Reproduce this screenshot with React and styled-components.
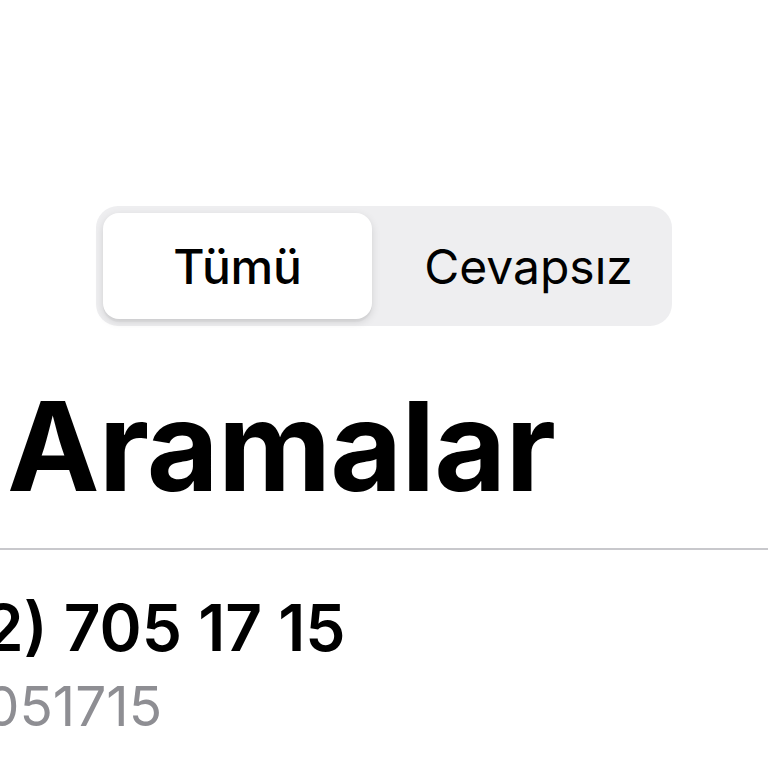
import React from "react";
import styled, { createGlobalStyle } from "styled-components";

const Global = createGlobalStyle`
  html, body { margin: 0; padding: 0; background: #ffffff; }
  body { font-family: Inter, "Noto Sans", "Liberation Sans", sans-serif; -webkit-font-smoothing: antialiased; }
`;

const Screen = styled.div`
  width: 768px;
  height: 768px;
  overflow: hidden;
  background: #ffffff;
  display: flex;
  flex-direction: column;
`;

const TopBar = styled.div`
  display: flex;
  justify-content: center;
  padding-top: 206px;
`;

const Segmented = styled.div`
  display: flex;
  width: 576px;
  height: 120px;
  box-sizing: border-box;
  padding: 7px;
  border-radius: 22px;
  background: #eeeef0;
`;

const Segment = styled.div`
  flex: ${(p) => (p.$active ? "0 0 269px" : "1 1 auto")};
  box-sizing: border-box;
  padding-left: ${(p) => (p.$active ? "0" : "20px")};
  display: flex;
  align-items: center;
  justify-content: center;
  border-radius: 16px;
  background: ${(p) => (p.$active ? "#ffffff" : "transparent")};
  box-shadow: ${(p) =>
    p.$active ? "0 3px 8px rgba(0,0,0,0.12), 0 3px 1px rgba(0,0,0,0.04)" : "none"};
  font-size: 48px;
  font-weight: ${(p) => (p.$active ? 500 : 400)};
  color: #000;
  letter-spacing: ${(p) => (p.$active ? "-0.2px" : "0px")};
`;

const Title = styled.h1`
  margin: 0;
  padding: 58px 0 0 7px;
  font-size: 124px;
  line-height: 124px;
  font-weight: 700;
  letter-spacing: -0.8px;
  color: #000;
`;

const Divider = styled.div`
  margin-top: 40px;
  height: 2px;
  background: #c8c8cc;
`;

const Row = styled.div`
  display: flex;
  flex-direction: column;
  padding-top: 38px;
`;

const Primary = styled.div`
  margin-left: -107px;
  font-size: 64px;
  line-height: 80px;
  font-weight: 600;
  color: #000;
  white-space: nowrap;
`;

const Secondary = styled.div`
  margin-top: 5px;
  margin-left: -135px;
  font-size: 55px;
  line-height: 66px;
  font-weight: 400;
  color: #8e8e93;
  white-space: nowrap;
`;

export default function App() {
  return (
    <>
      <Global />
      <Screen>
        <TopBar>
          <Segmented>
            <Segment $active>Tümü</Segment>
            <Segment>Cevapsız</Segment>
          </Segmented>
        </TopBar>
        <Title>Aramalar</Title>
        <Divider />
        <Row>
          <Primary>(212) 705 17 15</Primary>
          <Secondary>2127051715</Secondary>
        </Row>
      </Screen>
    </>
  );
}
